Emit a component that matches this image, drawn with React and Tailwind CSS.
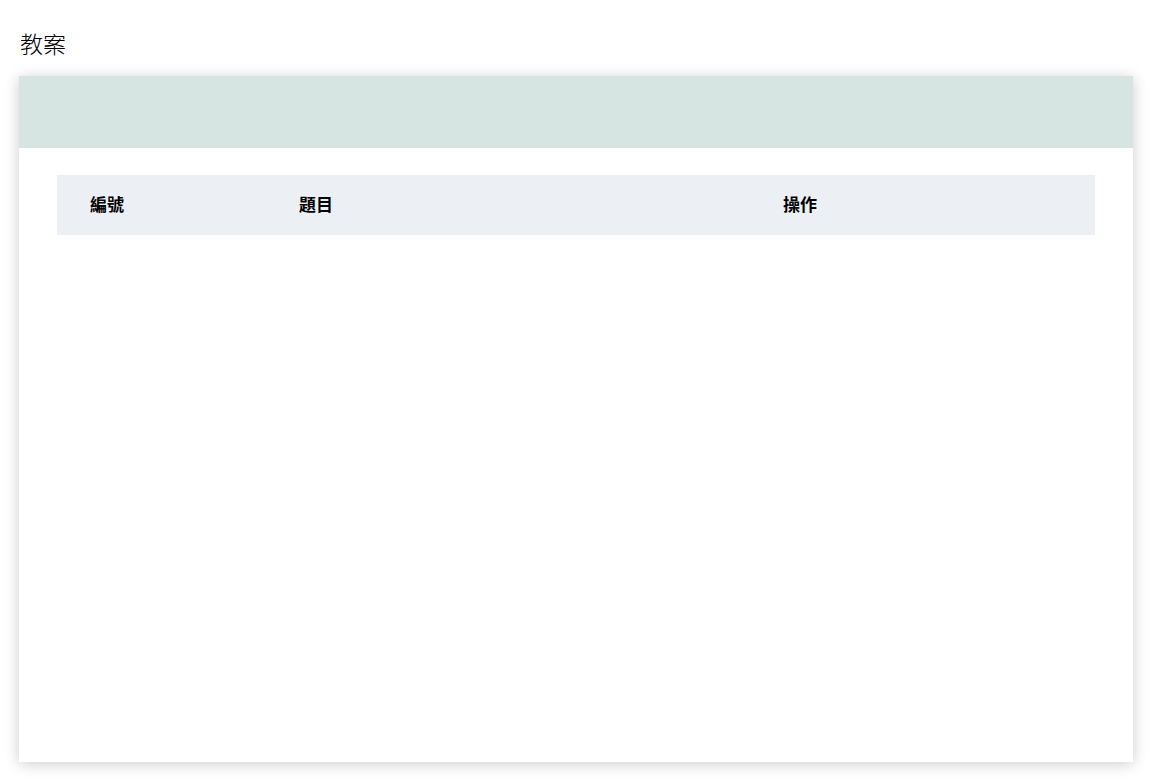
const FONT = "font-['Noto_Sans_CJK_TC','Noto_Sans',sans-serif]";

// Table column definitions
const COLUMNS = [
  { key: 'id', label: '編號', width: 'w-[209px]' },
  { key: 'title', label: '題目', width: 'w-[484px]' },
  { key: 'actions', label: '操作', width: 'flex-1' },
];

function LessonTable({ rows = [] }) {
  return (
    <div className="w-full">
      <div className="flex h-[60px] items-center bg-[#ecf0f5] pb-[3px]">
        {COLUMNS.map((col) => (
          <div
            key={col.key}
            className={`${col.width} pl-[33px] text-[17px] font-bold leading-none text-black`}
          >
            {col.label}
          </div>
        ))}
      </div>
      {rows.map((row) => (
        <div key={row.id} className="flex h-[50px] items-center border-b border-gray-100">
          <div className="w-[209px] pl-[33px]">{row.id}</div>
          <div className="w-[484px] pl-[33px]">{row.title}</div>
          <div className="flex-1 pl-[33px]" />
        </div>
      ))}
    </div>
  );
}

export default function App() {
  return (
    <div className={`min-h-[781px] bg-white px-[19px] pt-[28px] ${FONT}`}>
      <h1 className="pl-px text-[23px] font-light leading-[30px] text-black">教案</h1>

      <div className="mt-[18px] h-[686px] w-[1114px] bg-white shadow-[0_2px_14px_rgba(0,0,0,0.2)]">
        <div className="h-[72px] bg-[#d6e5e1]" />
        <div className="px-[38px] pt-[27px]">
          <LessonTable />
        </div>
      </div>
    </div>
  );
}
